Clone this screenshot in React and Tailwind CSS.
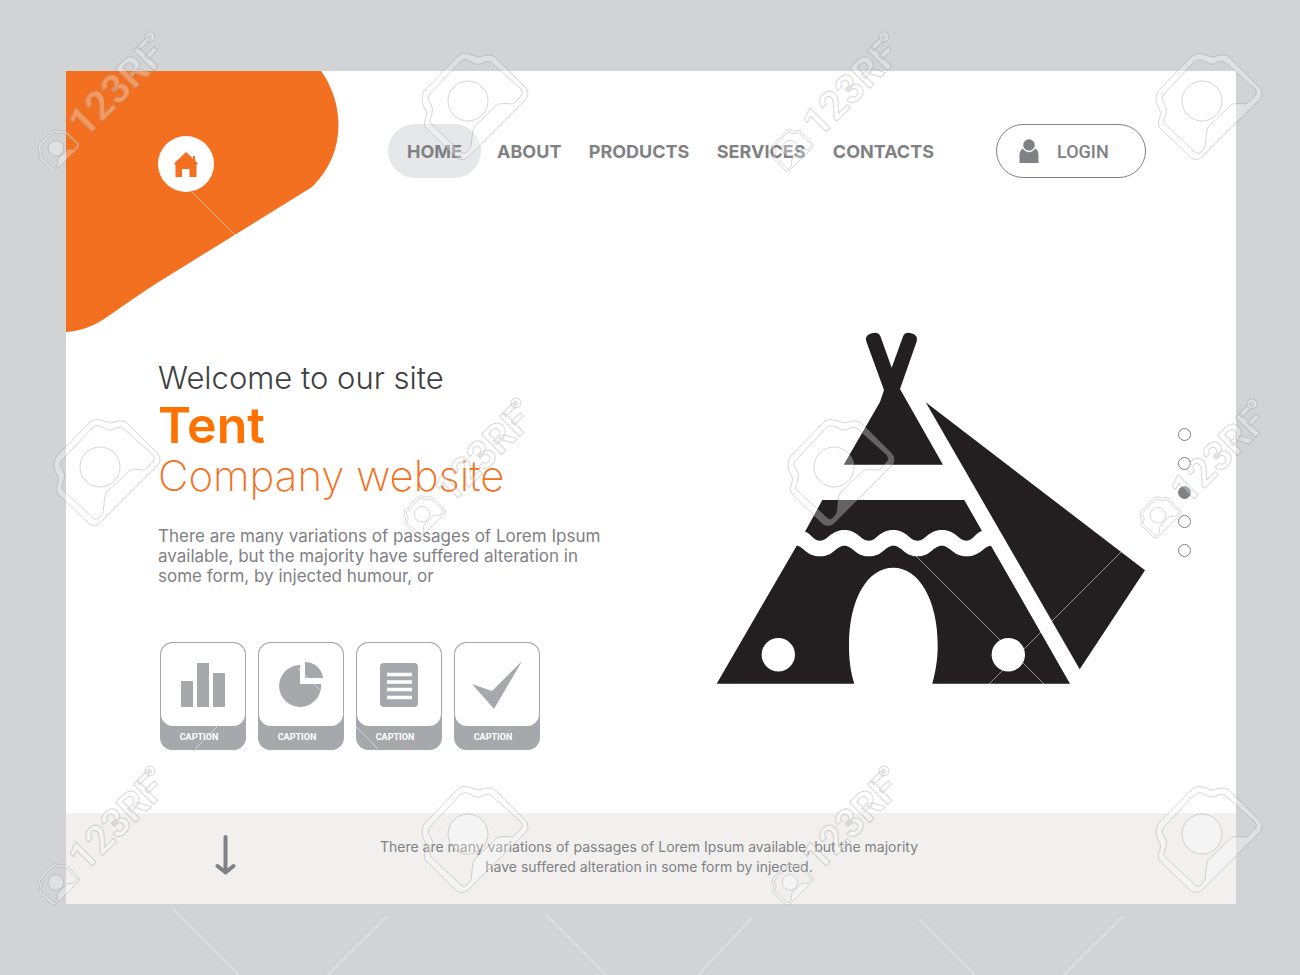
import React, { useState } from 'react';

const LINKS = ['ABOUT', 'PRODUCTS', 'SERVICES', 'CONTACTS'];
const SLIDES = [0, 1, 2, 3, 4];

/* Watermark positions on a 1300x975 canvas */
const CAMERAS = [[422, 54], [1156, 54], [54, 420], [788, 420], [422, 787], [1156, 787]];
const LOGOS = [[38, 130], [772, 130], [404, 496], [1140, 497], [38, 864], [772, 864]];

function BarsIcon() {
  return (
    <svg width="44" height="44" viewBox="0 0 44 44" fill="#a7a8ab">
      <path d="M0 18h12v26H0zM16 0h12v44H16zM32 10h12v34H32z" />
    </svg>
  );
}

function PieIcon() {
  return (
    <svg width="44" height="45" viewBox="0 0 44 45" fill="#a7a8ab">
      <path d="M21 3v19h21a21 21 0 1 1-21-19z" />
      <path d="M26 0a18 18 0 0 1 18 16H26z" />
    </svg>
  );
}

function ListIcon() {
  return (
    <svg width="38" height="44" viewBox="0 0 38 44">
      <rect width="38" height="44" rx="4" fill="#a7a8ab" />
      <path d="M7 11.500h25M7 19h25M7 26.500h25M7 34.500h25" stroke="#fff" strokeWidth="3.600" />
    </svg>
  );
}

function CheckIcon() {
  return (
    <svg width="50" height="48" viewBox="0 0 50 48" fill="#a7a8ab">
      <path d="M0 23 20 30 50 0 22 48z" />
    </svg>
  );
}

const TILES = [BarsIcon, PieIcon, ListIcon, CheckIcon];

function Tent() {
  return (
    <svg className="w-[430px] shrink-0" viewBox="0 0 430 352" fill="#231f20" role="img" aria-label="Tent">
      <path d="M168 58 150.500 10C149 5 151 3 155 1.500C160 0 163 1 164.500 4.500L175.700 35.700 187 4.500C188.500 1 191 0 196 1.500C200 3 202 5 200.500 10L184 57 227 132.700H127.700L164 70z" />
      <path d="M106.300 168H248.300L266 199C260 200 257 208.700 250.700 208.700C242 208.700 240 198 226 198C212 198 210 208.700 201.500 208.700C193 208.700 191 198 177.300 198C163 198 161 208.700 153 208.700C144 208.700 142 198 128.300 198C115 198 112 208.700 104 208.700C97 208.700 95 201 89 199.700z" />
      <path
        fillRule="evenodd"
        d="M80.700 213.700C87 213.700 90 224.300 104 224.300C118 224.300 120 213.700 128.300 213.700C137 213.700 139 224.300 153 224.300C167 224.300 169 213.700 177.300 213.700C186 213.700 188 224.300 201.500 224.300C215 224.300 217 213.700 226 213.700C234 213.700 237 224.300 250.700 224.300C264 224.300 268 214 275 213.700L354 351.700H216.300C219.500 340 221.700 328 221.700 313C221.700 268 203 235.700 177.300 235.700C151 235.700 133 268 133 313C133 328 134.500 340 138.300 351.700H.7zM45.600 322.700a16.700 16.700 0 1 0 33.400 0a16.700 16.700 0 1 0-33.400 0zM275.600 322.700a16.700 16.700 0 1 0 33.400 0a16.700 16.700 0 1 0-33.400 0z"
      />
      <path d="M209.700 70.300 429 238.300 363.700 337.300z" />
    </svg>
  );
}

function Camera() {
  return (
    <g strokeLinejoin="round">
      <path
        fillRule="evenodd"
        d="M36 2Q41-2 47 0L53 2Q57 4 61 2Q69-1 74 4L104 34Q108 40 104 45L46 103Q40 108 34 103L3 73Q1 69 4 63Q6 58 2 53Q-2 45 2 37zM38 8Q42 4 48 7L54 10Q58 11 62 8Q67 6 70 9L99 35Q102 39 99 42L91 50Q83 49 76 50L52 73Q50 78 50 84L49 93L45 98Q42 101 39 98L8 69Q7 66 10 60Q12 54 8 49Q4 44 8 40z"
      />
      <circle cx="46" cy="47" r="20" />
    </g>
  );
}

function Watermark() {
  return (
    <svg
      className="pointer-events-none absolute inset-0 h-full w-full"
      viewBox="0 0 1300 975"
      preserveAspectRatio="xMidYMid slice"
      aria-hidden="true"
    >
      <g stroke="#fff" strokeOpacity="0.5">
        <path d="M192 192l60 60M916 556l130 130M1121 552l-133 133M217 727l-22 22M298 668l80 81" />
        <path strokeOpacity="0.25" strokeWidth="2" d="M174 910l65 65M386 917l-58 58M546 915l60 60M752 918l-54 57M919 919l56 56M1122 917l-58 58" />
      </g>
      <g fill="#fff" fillOpacity="0.3" stroke="#8a8a8a" strokeOpacity="0.35">
        {CAMERAS.map(([x, y]) => (
          <g key={`${x}-${y}`} transform={`translate(${x} ${y})`}><Camera /></g>
        ))}
        {LOGOS.map(([x, y]) => (
          <g key={`${x}-${y}`} transform={`translate(${x} ${y})`}>
            <g transform="scale(0.390)" strokeWidth="2.500"><Camera /></g>
            <text transform="translate(47 9) rotate(-45)" fontFamily="Roboto, sans-serif" fontWeight="700" fontSize="40">123RF</text>
            <circle cx="112" cy="-93" r="5" />
            <text x="109" y="-90" fontFamily="Roboto, sans-serif" fontSize="8" strokeWidth="0.500">R</text>
          </g>
        ))}
      </g>
    </svg>
  );
}

export default function App() {
  const [slide, setSlide] = useState(2);

  return (
    <div className="relative flex min-h-screen flex-col overflow-hidden bg-[#d1d3d4] pt-[71px] pr-[64px] pb-[71px] pl-[66px] font-['Inter',sans-serif]">
      <div className="relative flex flex-1 flex-col bg-white">
        <svg className="absolute top-0 left-0" width="273" height="262" viewBox="0 0 273 262" fill="#f37021" aria-hidden="true">
          <path d="M0 0H255C266 15 272.500 34 272.500 54C272.500 78 263 99 247 115Q245 117 242 118.500L91 212C74 223 58 234 41 246C28 255 15 260 0 261z" />
        </svg>

        <header className="relative flex items-start pt-[53px] pr-[90px] pl-[92px]">
          <a href="#home" aria-label="Home" className="mt-3 flex size-14 shrink-0 items-center justify-center rounded-full bg-white">
            <svg width="24" height="25" viewBox="0 0 24 25" fill="#f37021">
              <path d="M12 0 19 6.500V4h2v4.500L24 11.500 22.500 13V25H15.500V17H8V25H1.500V13L0 11.500z" />
            </svg>
          </a>

          <nav className="ml-[174px] flex h-[54px] items-center text-[18px] font-bold text-[#808184]">
            <a href="#home" className="flex h-full w-[93px] items-center justify-center rounded-full bg-[#e6e7e8]">HOME</a>
            <div className="ml-4 flex w-[437px] justify-between">
              {LINKS.map(l => <a key={l} href={`#${l.toLowerCase()}`}>{l}</a>)}
            </div>
          </nav>

          <button type="button" className="ml-auto flex h-[54px] w-[150px] items-center rounded-full border border-[#808184] pl-[22px] font-['Roboto',sans-serif] text-[18px] font-medium text-[#808184]">
            <svg width="20" height="24" viewBox="0 0 20 24" fill="#808184" aria-hidden="true">
              <circle cx="10" cy="6" r="5.800" />
              <path d="M3.500 9.500Q10 17 16.500 9.500Q19.500 12 19.500 16V24H.5V16Q.5 12 3.500 9.500z" />
            </svg>
            <span className="ml-[18px]">LOGIN</span>
          </button>
        </header>

        <main className="flex flex-1 items-start pt-[140px] pr-[45px] pb-[60px] pl-[92px]">
          <section className="mt-6 w-[480px]">
            <h1 className="text-[#404041]">
              <span className="block text-[31px] leading-[44px] font-light">Welcome to our site</span>
              <span className="block text-[50px] leading-[50px] font-semibold text-[#ff7200]">Tent</span>
              <span className="block text-[42px] leading-[52px] font-extralight text-[#f37021]">Company website</span>
            </h1>
            <p className="mt-6 text-[17px] leading-5 text-[#808184]">
              There are many variations of passages of Lorem Ipsum<br />
              available, but the majority have suffered alteration in<br />
              some form, by injected humour, or
            </p>
            <div className="mt-14 ml-0.5 flex gap-3">
              {TILES.map((Icon, i) => (
                <figure key={i} className="w-[86px] rounded-xl border border-[#a7a8ab] bg-[#a7a8ab]">
                  <div className="flex h-[83px] items-center justify-center rounded-xl bg-white">
                    <Icon />
                  </div>
                  <figcaption className="h-[23px] pr-2 text-center font-['Roboto',sans-serif] text-[9px] leading-[23px] font-bold text-white">CAPTION</figcaption>
                </figure>
              ))}
            </div>
          </section>

          <div className="ml-auto flex items-center gap-8">
            <Tent />
            <div className="flex flex-col gap-4 pb-[31px]">
              {SLIDES.map(i => (
                <button
                  key={i}
                  type="button"
                  aria-label={`Slide ${i + 1}`}
                  onClick={() => setSlide(i)}
                  className={`size-[13px] rounded-full border border-[#808184] ${i === slide ? 'bg-[#808184]' : 'bg-white'}`}
                />
              ))}
            </div>
          </div>
        </main>

        <footer className="grid h-[91px] grid-cols-[1fr_auto_1fr] items-center bg-[#f1f0ef] pr-1 pb-1">
          <a href="#next" aria-label="Scroll down" className="ml-[149px] w-[21px] pb-1">
            <svg className="block" width="21" height="40" viewBox="0 0 21 40" fill="none" stroke="#808184" strokeWidth="4" strokeLinecap="round" strokeLinejoin="round">
              <path d="M10.500 2v35M2.500 31l8 6.500 8-6.500" />
            </svg>
          </a>
          <p className="text-center text-[14px] leading-5 text-[#808184]">
            There are many variations of passages of Lorem Ipsum available, but the majority<br />
            have suffered alteration in some form by injected.
          </p>
        </footer>
      </div>

      <Watermark />
    </div>
  );
}
